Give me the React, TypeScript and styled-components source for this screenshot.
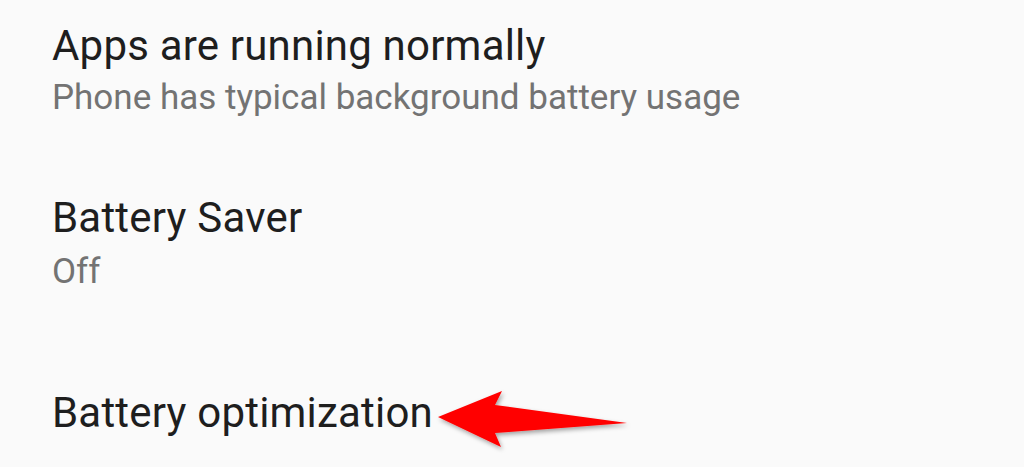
import React from "react";
import styled, { createGlobalStyle } from "styled-components";

const GlobalStyle = createGlobalStyle`
  html, body {
    margin: 0;
    padding: 0;
    background: #fafafa;
  }
  body {
    font-family: Roboto, "Noto Sans", "Liberation Sans", sans-serif;
    -webkit-font-smoothing: antialiased;
  }
`;

const Page = styled.div`
  position: relative;
  width: 1024px;
  height: 467px;
  overflow: hidden;
  background: #fafafa;
`;

const List = styled.div`
  display: flex;
  flex-direction: column;
`;

const Item = styled.div<{ $top: number; $bottom: number }>`
  display: flex;
  flex-direction: column;
  padding: ${(p) => p.$top}px 52px ${(p) => p.$bottom}px;
`;

const Title = styled.div`
  font-size: 42px;
  line-height: 52px;
  letter-spacing: 0.2px;
  color: #1e1e1e;
  font-weight: 400;
  white-space: nowrap;
`;

const Summary = styled.div<{ $gap: number }>`
  margin-top: ${(p) => p.$gap}px;
  font-size: 35px;
  line-height: 44px;
  color: #737373;
  font-weight: 400;
  white-space: nowrap;
`;

const Annotation = styled.svg`
  position: absolute;
  left: 430px;
  top: 380px;
  width: 210px;
  height: 80px;
  overflow: visible;
`;

const Arrow = () => (
  <Annotation viewBox="430 380 210 80">
    <defs>
      <filter id="shadow" x="-20%" y="-40%" width="140%" height="180%">
        <feDropShadow dx="1.5" dy="2.5" stdDeviation="2" floodColor="#000" floodOpacity="0.35" />
      </filter>
    </defs>
    <polygon
      points="438,417 502,391 495,405 627,423 495,433 501,447"
      fill="#ff0000"
      filter="url(#shadow)"
    />
  </Annotation>
);

export default function App() {
  return (
    <Page>
      <GlobalStyle />
      <List>
        <Item $top={20} $bottom={37}>
          <Title>Apps are running normally</Title>
          <Summary $gap={4}>Phone has typical background battery usage</Summary>
        </Item>
        <Item $top={35} $bottom={35}>
          <Title>Battery Saver</Title>
          <Summary $gap={6}>Off</Summary>
        </Item>
        <Item $top={58} $bottom={35}>
          <Title>Battery optimization</Title>
        </Item>
      </List>
      <Arrow />
    </Page>
  );
}
